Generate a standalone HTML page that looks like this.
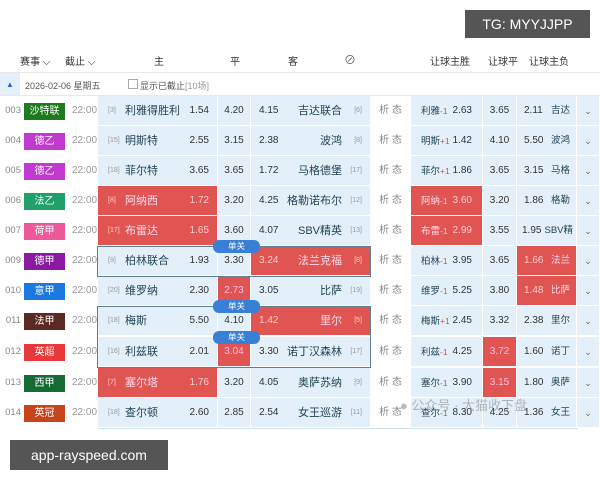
<!DOCTYPE html><html><head><meta charset="utf-8"><style>
*{margin:0;padding:0;box-sizing:border-box}
body{width:600px;height:480px;background:#fff;font-family:"Liberation Sans","Noto Sans CJK SC",sans-serif;position:relative;overflow:hidden;color:#333}
.hd{position:absolute;top:53px;font-size:10px;color:#333}
.row{position:absolute;left:0;width:600px;height:30px;font-size:10px}
.c{position:absolute;top:0;height:30px;line-height:30px;border-right:1px solid #fff;border-bottom:1px solid #fff;white-space:nowrap}
.b{background:#e3f0fa}
.r{background:#e05452;color:#fbe}
.num{left:0;width:22px;color:#888;font-size:9.5px;text-align:right}
.bd{position:absolute;left:24px;top:7px;width:41px;height:17px;line-height:17px;text-align:center;color:#fff;font-size:10px}
.tm{left:72px;color:#999;font-size:10px}
.home{left:98px;width:120px}
.ping{left:218px;width:33px;text-align:center}
.away{left:251px;width:120px}
.xi{left:371px;width:40px;color:#888;text-align:center;background:#fff}
.w{left:411px;width:72px}
.d{left:483px;width:34px;text-align:center}
.l{left:517px;width:60px}
.ch{left:577px;width:23px;text-align:center;color:#666;font-size:9px}
.rk{position:absolute;font-size:7px;color:#999}
.r .rk{color:#fcc}
.nm{position:absolute;font-size:11px;color:#245}
.r .nm{color:#fde}
.od{position:absolute;color:#333}
.r .od{color:#fcc}
.w .nm,.l .nm{font-size:9.5px!important}
.dan{position:absolute;left:213px;width:47px;height:13px;line-height:13px;background:#3a7fd6;color:#fff;font-size:8.5px;text-align:center;border-radius:6px;z-index:3}
.box{position:absolute;left:97px;width:274px;height:31px;border:1.5px solid #5f7f90;z-index:2}
.sm{color:#c55;font-size:8.5px}
.r .sm{color:#fcc}
</style></head><body>
<div style="position:absolute;left:465px;top:10px;width:125px;height:28px;background:#555;color:#fff;font-size:14px;line-height:28px;text-align:center">TG: MYYJJPP</div>
<div class="hd" style="left:20px">赛事 ⌵</div>
<div class="hd" style="left:65px">截止 ⌵</div>
<div class="hd" style="left:154px">主</div>
<div class="hd" style="left:230px">平</div>
<div class="hd" style="left:288px">客</div>
<div class="hd" style="left:344px;font-size:12px;top:51px;color:#666">⊘</div>
<div class="hd" style="left:430px">让球主胜</div>
<div class="hd" style="left:488px">让球平</div>
<div class="hd" style="left:529px">让球主负</div>
<div style="position:absolute;top:72px;left:0;width:600px;height:1px;background:#e8e8e8"></div>
<div style="position:absolute;top:73px;left:0;width:20px;height:23px;background:#e3f0fa;color:#2b6cb0;font-size:8px;text-align:center;line-height:23px">▲</div>
<div style="position:absolute;top:79px;left:25px;font-size:9px;color:#555">2026-02-06 星期五</div>
<div style="position:absolute;top:79px;left:128px;width:10px;height:10px;border:1px solid #aaa"></div>
<div style="position:absolute;top:79px;left:140px;font-size:9px;color:#555">显示已截止<span style="color:#999">[10场]</span></div>
<div style="position:absolute;top:95px;left:0;width:600px;height:1px;background:#e8e8e8"></div>

<div class="row" style="top:96px"><div class="c num">003</div><div class="bd" style="background:#1e7a1e">沙特联</div><div class="c tm">22:00</div>
<div class="c b home"><span class="rk" style="left:10px">[3]</span><span class="nm" style="left:27px">利雅得胜利</span><span class="od" style="right:8px">1.54</span></div><div class="c b ping">4.20</div>
<div class="c b away"><span class="od" style="left:8px">4.15</span><span class="nm" style="right:28px">吉达联合</span><span class="rk" style="right:8px">[6]</span></div><div class="c xi">析 态</div>
<div class="c b w"><span class="nm" style="left:10px">利雅<span class="sm">-1</span></span><span class="od" style="right:10px">2.63</span></div><div class="c b d">3.65</div><div class="c b l"><span class="od" style="left:7px">2.11</span><span class="nm" style="right:6px">吉达</span></div><div class="c b ch">⌄</div></div>

<div class="row" style="top:126px"><div class="c num">004</div><div class="bd" style="background:#c03ad0">德乙</div><div class="c tm">22:00</div>
<div class="c b home"><span class="rk" style="left:10px">[15]</span><span class="nm" style="left:27px">明斯特</span><span class="od" style="right:8px">2.55</span></div><div class="c b ping">3.15</div>
<div class="c b away"><span class="od" style="left:8px">2.38</span><span class="nm" style="right:28px">波鸿</span><span class="rk" style="right:8px">[8]</span></div><div class="c xi">析 态</div>
<div class="c b w"><span class="nm" style="left:10px">明斯<span class="sm">+1</span></span><span class="od" style="right:10px">1.42</span></div><div class="c b d">4.10</div><div class="c b l"><span class="od" style="left:7px">5.50</span><span class="nm" style="right:6px">波鸿</span></div><div class="c b ch">⌄</div></div>

<div class="row" style="top:156px"><div class="c num">005</div><div class="bd" style="background:#c03ad0">德乙</div><div class="c tm">22:00</div>
<div class="c b home"><span class="rk" style="left:10px">[18]</span><span class="nm" style="left:27px">菲尔特</span><span class="od" style="right:8px">3.65</span></div><div class="c b ping">3.65</div>
<div class="c b away"><span class="od" style="left:8px">1.72</span><span class="nm" style="right:28px">马格德堡</span><span class="rk" style="right:8px">[17]</span></div><div class="c xi">析 态</div>
<div class="c b w"><span class="nm" style="left:10px">菲尔<span class="sm">+1</span></span><span class="od" style="right:10px">1.86</span></div><div class="c b d">3.65</div><div class="c b l"><span class="od" style="left:7px">3.15</span><span class="nm" style="right:6px">马格</span></div><div class="c b ch">⌄</div></div>

<div class="row" style="top:186px"><div class="c num">006</div><div class="bd" style="background:#22a06b">法乙</div><div class="c tm">22:00</div>
<div class="c r home"><span class="rk" style="left:10px">[8]</span><span class="nm" style="left:27px">阿纳西</span><span class="od" style="right:8px">1.72</span></div><div class="c b ping">3.20</div>
<div class="c b away"><span class="od" style="left:8px">4.25</span><span class="nm" style="right:28px">格勒诺布尔</span><span class="rk" style="right:8px">[12]</span></div><div class="c xi">析 态</div>
<div class="c r w"><span class="nm" style="left:10px">阿纳<span class="sm">-1</span></span><span class="od" style="right:10px">3.60</span></div><div class="c b d">3.20</div><div class="c b l"><span class="od" style="left:7px">1.86</span><span class="nm" style="right:6px">格勒</span></div><div class="c b ch">⌄</div></div>

<div class="row" style="top:216px"><div class="c num">007</div><div class="bd" style="background:#ec5a9a">荷甲</div><div class="c tm">22:00</div>
<div class="c r home"><span class="rk" style="left:10px">[17]</span><span class="nm" style="left:27px">布雷达</span><span class="od" style="right:8px">1.65</span></div><div class="c b ping">3.60</div>
<div class="c b away"><span class="od" style="left:8px">4.07</span><span class="nm" style="right:28px">SBV精英</span><span class="rk" style="right:8px">[13]</span></div><div class="c xi">析 态</div>
<div class="c r w"><span class="nm" style="left:10px">布雷<span class="sm">-1</span></span><span class="od" style="right:10px">2.99</span></div><div class="c b d">3.55</div><div class="c b l"><span class="od" style="left:5px">1.95</span><span class="nm" style="right:3px">SBV精</span></div><div class="c b ch">⌄</div></div>

<div class="row" style="top:246px"><div class="c num">009</div><div class="bd" style="background:#8a1aa0">德甲</div><div class="c tm">22:00</div>
<div class="c b home"><span class="rk" style="left:10px">[9]</span><span class="nm" style="left:27px">柏林联合</span><span class="od" style="right:8px">1.93</span></div><div class="c b ping">3.30</div>
<div class="c r away"><span class="od" style="left:8px">3.24</span><span class="nm" style="right:28px">法兰克福</span><span class="rk" style="right:8px">[8]</span></div><div class="c xi">析 态</div>
<div class="c b w"><span class="nm" style="left:10px">柏林<span class="sm">-1</span></span><span class="od" style="right:10px">3.95</span></div><div class="c b d">3.65</div><div class="c r l"><span class="od" style="left:7px">1.66</span><span class="nm" style="right:6px">法兰</span></div><div class="c b ch">⌄</div></div>

<div class="row" style="top:276px"><div class="c num">010</div><div class="bd" style="background:#1a78e0">意甲</div><div class="c tm">22:00</div>
<div class="c b home"><span class="rk" style="left:10px">[20]</span><span class="nm" style="left:27px">维罗纳</span><span class="od" style="right:8px">2.30</span></div><div class="c r ping">2.73</div>
<div class="c b away"><span class="od" style="left:8px">3.05</span><span class="nm" style="right:28px">比萨</span><span class="rk" style="right:8px">[19]</span></div><div class="c xi">析 态</div>
<div class="c b w"><span class="nm" style="left:10px">维罗<span class="sm">-1</span></span><span class="od" style="right:10px">5.25</span></div><div class="c b d">3.80</div><div class="c r l"><span class="od" style="left:7px">1.48</span><span class="nm" style="right:6px">比萨</span></div><div class="c b ch">⌄</div></div>

<div class="row" style="top:306px"><div class="c num">011</div><div class="bd" style="background:#5a2a22">法甲</div><div class="c tm">22:00</div>
<div class="c b home"><span class="rk" style="left:10px">[18]</span><span class="nm" style="left:27px">梅斯</span><span class="od" style="right:8px">5.50</span></div><div class="c b ping">4.10</div>
<div class="c r away"><span class="od" style="left:8px">1.42</span><span class="nm" style="right:28px">里尔</span><span class="rk" style="right:8px">[5]</span></div><div class="c xi">析 态</div>
<div class="c b w"><span class="nm" style="left:10px">梅斯<span class="sm">+1</span></span><span class="od" style="right:10px">2.45</span></div><div class="c b d">3.32</div><div class="c b l"><span class="od" style="left:7px">2.38</span><span class="nm" style="right:6px">里尔</span></div><div class="c b ch">⌄</div></div>

<div class="row" style="top:337px"><div class="c num">012</div><div class="bd" style="background:#e8383a">英超</div><div class="c tm">22:00</div>
<div class="c b home"><span class="rk" style="left:10px">[16]</span><span class="nm" style="left:27px">利兹联</span><span class="od" style="right:8px">2.01</span></div><div class="c r ping">3.04</div>
<div class="c b away"><span class="od" style="left:8px">3.30</span><span class="nm" style="right:28px">诺丁汉森林</span><span class="rk" style="right:8px">[17]</span></div><div class="c xi">析 态</div>
<div class="c b w"><span class="nm" style="left:10px">利兹<span class="sm">-1</span></span><span class="od" style="right:10px">4.25</span></div><div class="c r d">3.72</div><div class="c b l"><span class="od" style="left:7px">1.60</span><span class="nm" style="right:6px">诺丁</span></div><div class="c b ch">⌄</div></div>

<div class="row" style="top:368px"><div class="c num">013</div><div class="bd" style="background:#146b34">西甲</div><div class="c tm">22:00</div>
<div class="c r home"><span class="rk" style="left:10px">[7]</span><span class="nm" style="left:27px">塞尔塔</span><span class="od" style="right:8px">1.76</span></div><div class="c b ping">3.20</div>
<div class="c b away"><span class="od" style="left:8px">4.05</span><span class="nm" style="right:28px">奥萨苏纳</span><span class="rk" style="right:8px">[9]</span></div><div class="c xi">析 态</div>
<div class="c b w"><span class="nm" style="left:10px">塞尔<span class="sm">-1</span></span><span class="od" style="right:10px">3.90</span></div><div class="c r d">3.15</div><div class="c b l"><span class="od" style="left:7px">1.80</span><span class="nm" style="right:6px">奥萨</span></div><div class="c b ch">⌄</div></div>

<div class="row" style="top:398px"><div class="c num">014</div><div class="bd" style="background:#c8441a">英冠</div><div class="c tm">22:00</div>
<div class="c b home"><span class="rk" style="left:10px">[18]</span><span class="nm" style="left:27px">查尔顿</span><span class="od" style="right:8px">2.60</span></div><div class="c b ping">2.85</div>
<div class="c b away"><span class="od" style="left:8px">2.54</span><span class="nm" style="right:28px">女王巡游</span><span class="rk" style="right:8px">[11]</span></div><div class="c xi">析 态</div>
<div class="c b w"><span class="nm" style="left:10px">查尔<span class="sm">-1</span></span><span class="od" style="right:10px">8.30</span></div><div class="c b d">4.25</div><div class="c b l"><span class="od" style="left:7px">1.36</span><span class="nm" style="right:6px">女王</span></div><div class="c b ch">⌄</div></div>
<div style="position:absolute;top:428px;left:98px;width:480px;height:1px;background:#cfe0ee"></div>

<div class="box" style="top:246px"></div>
<div class="box" style="top:306px;height:62px"></div>
<div class="dan" style="top:240px">单关</div>
<div class="dan" style="top:300px">单关</div>
<div class="dan" style="top:331px">单关</div>

<div style="position:absolute;left:400px;top:395px;font-size:13px;color:rgba(120,120,120,.5);z-index:5">● 公众号 · 大猫收下盘</div>
<div style="position:absolute;left:10px;top:440px;width:158px;height:30px;background:#555;color:#fff;font-size:14px;line-height:30px;text-align:center">app-rayspeed.com</div>
</body></html>
